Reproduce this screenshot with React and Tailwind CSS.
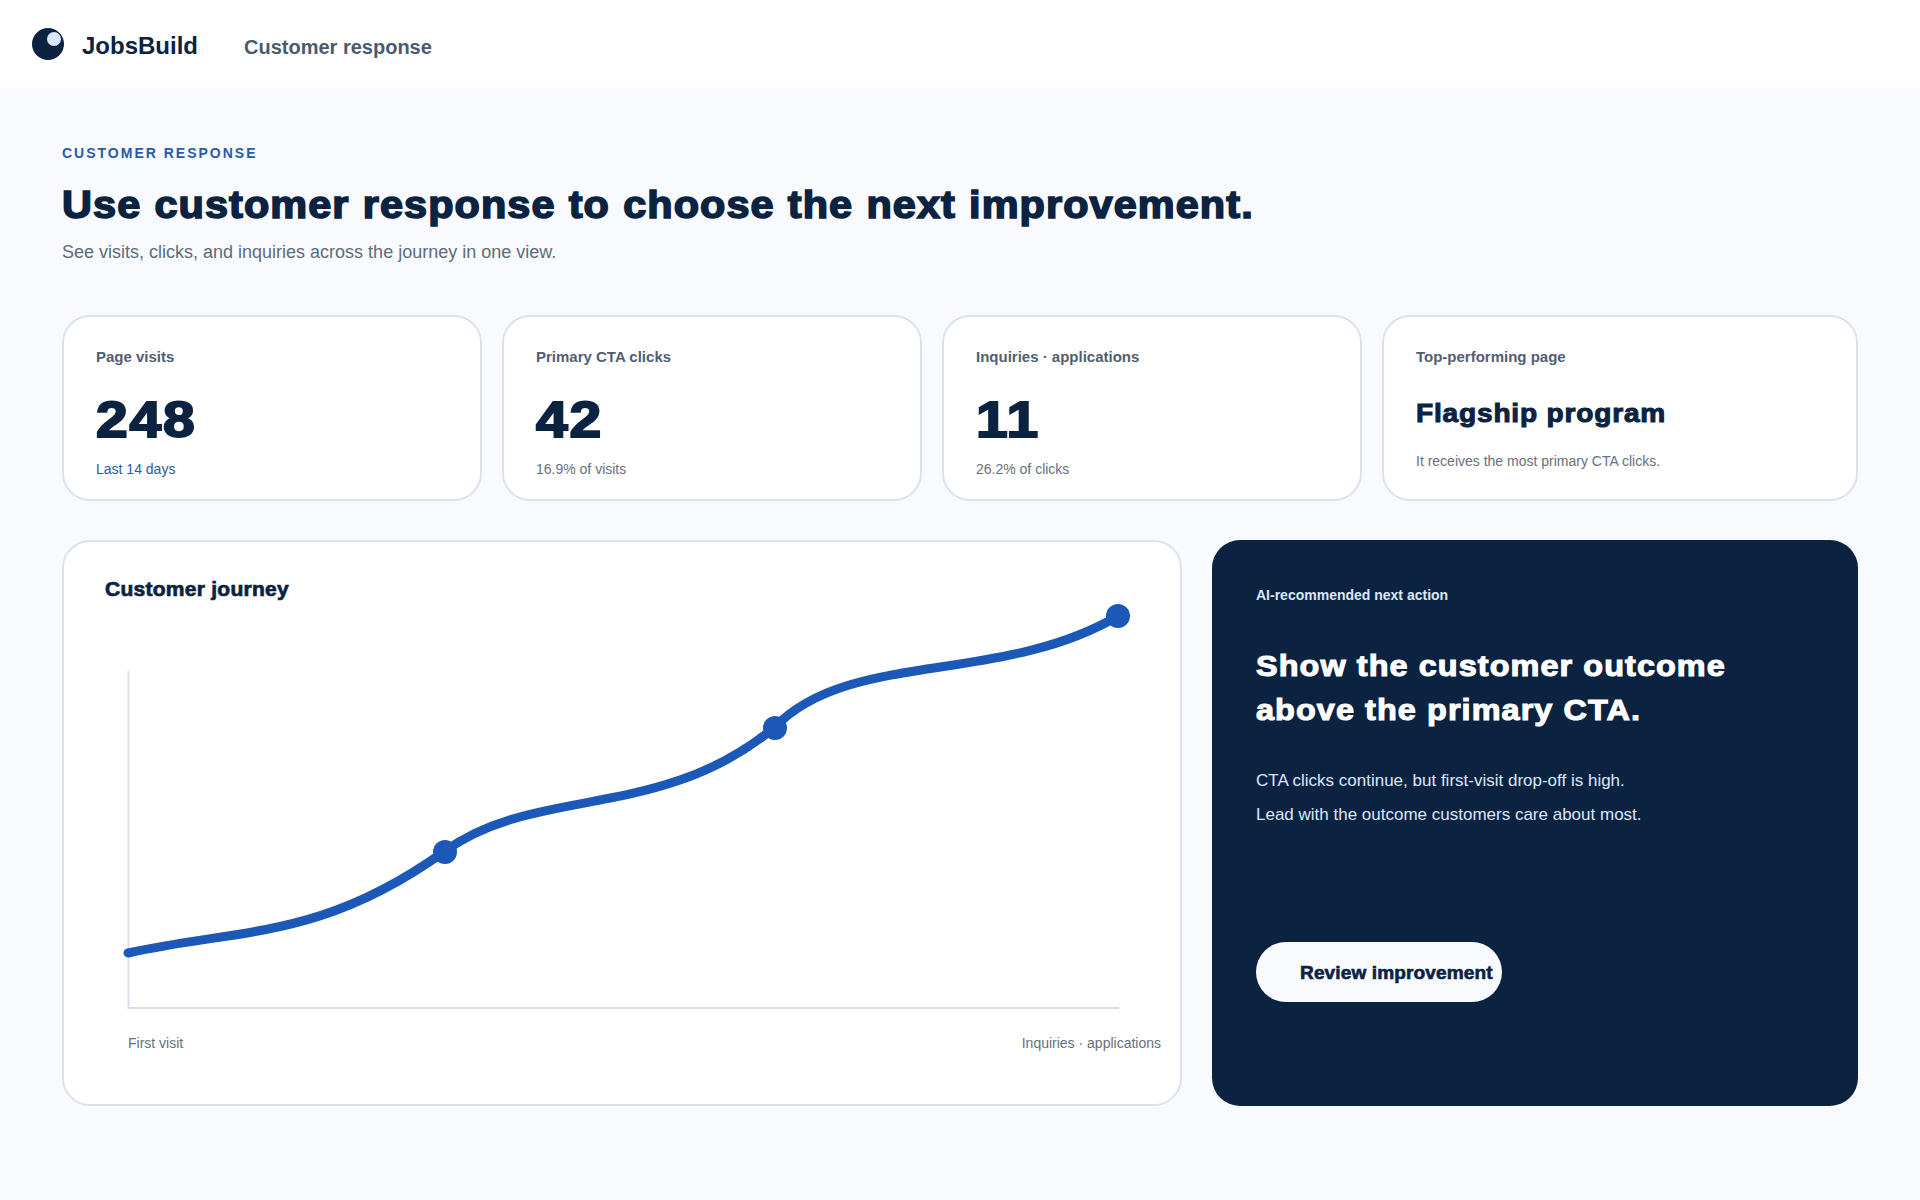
const font = "font-['Liberation_Sans',Arial,sans-serif]";

const stats = [
  { label: "Page visits", value: "248", note: "Last 14 days", noteColor: "text-[#2b5aa8]" },
  { label: "Primary CTA clicks", value: "42", note: "16.9% of visits", noteColor: "text-[#667080]" },
  { label: "Inquiries · applications", value: "11", note: "26.2% of clicks", noteColor: "text-[#667080]" },
];

function Logo() {
  return (
    <svg width="34" height="34" viewBox="0 0 34 34" className="block">
      <circle cx="17" cy="17" r="16" fill="#0b2340" />
      <circle cx="23" cy="12" r="7" fill="#dbe7fb" />
    </svg>
  );
}

function StatCard({ label, value, note, noteColor }) {
  return (
    <div className="h-[186px] rounded-[28px] border-2 border-[#dbe2ec] bg-white px-[32px] pt-[30px]">
      <div className="text-[15px] leading-[20px] font-bold text-[#525e70]">{label}</div>
      <div className="mt-[21px] w-fit origin-left scale-x-[1.14] text-[50px] leading-[64px] font-bold tracking-[1.6px] text-[#0b2340] [-webkit-text-stroke:2px_#0b2340]">
        {value}
      </div>
      <div className={`mt-[7px] text-[14px] leading-[20px] ${noteColor}`}>{note}</div>
    </div>
  );
}

function JourneyChart() {
  return (
    <svg width="1034" height="420" viewBox="104 610 1034 420" className="mt-[7px] block overflow-visible">
      <path d="M127.5 671 V1008 H1118" fill="none" stroke="#d9dee7" strokeWidth="2" />
      <path
        d="M127 953 C240 928 320 940 444 851 C535 785 660 822 774 727 C848 650 1000 685 1117 616"
        fill="none"
        stroke="#1c58b8"
        strokeWidth="9"
        strokeLinecap="round"
      />
      <circle cx="444" cy="852" r="12" fill="#1c58b8" />
      <circle cx="774" cy="728" r="12" fill="#1c58b8" />
      <circle cx="1117" cy="616" r="12" fill="#1c58b8" />
    </svg>
  );
}

export default function App() {
  return (
    <div className={`${font} min-h-[1200px] bg-[#f8fafd]`}>
      <header className="flex h-[88px] items-center bg-white pl-[31px]">
        <Logo />
        <span className="ml-[17px] mt-[4px] text-[24px] font-bold text-[#0b2340]">JobsBuild</span>
        <span className="ml-[46px] mt-[6px] text-[20px] font-bold text-[#4b5a6e]">Customer response</span>
      </header>

      <main className="px-[62px] pt-[55px]">
        <div className="text-[14px] leading-[20px] font-bold tracking-[2px] text-[#2b5aa8]">CUSTOMER RESPONSE</div>
        <h1 className="mt-[16px] w-fit origin-left scale-x-[1.09] text-[38px] leading-[52px] font-bold tracking-[1px] [word-spacing:0.5px] text-[#0b2340] [-webkit-text-stroke:1.6px_#0b2340]">
          Use customer response to choose the next improvement.
        </h1>
        <p className="mt-[8px] text-[18px] leading-[26px] text-[#5f6b7a]">
          See visits, clicks, and inquiries across the journey in one view.
        </p>

        <section className="mt-[50px] grid grid-cols-[420px_420px_420px_476px] gap-[20px]">
          {stats.map((s) => (
            <StatCard key={s.label} {...s} />
          ))}
          <div className="h-[186px] rounded-[28px] border-2 border-[#dbe2ec] bg-white px-[32px] pt-[30px]">
            <div className="text-[15px] leading-[20px] font-bold text-[#525e70]">Top-performing page</div>
            <div className="mt-[28px] w-fit origin-left scale-x-[1.08] text-[26px] leading-[36px] font-bold tracking-[0.75px] text-[#0b2340] [-webkit-text-stroke:1px_#0b2340]">
              Flagship program
            </div>
            <div className="mt-[20px] text-[14px] leading-[20px] text-[#667080]">It receives the most primary CTA clicks.</div>
          </div>
        </section>

        <section className="mt-[39px] grid grid-cols-[1120px_646px] gap-[30px]">
          <div className="h-[566px] rounded-[28px] border-2 border-[#dbe2ec] bg-white pl-[41px] pt-[33px]">
            <h2 className="w-fit origin-left scale-x-[1.05] text-[20px] leading-[28px] font-bold tracking-[0.25px] text-[#0b2340] [-webkit-text-stroke:0.7px_#0b2340]">
              Customer journey
            </h2>
            <JourneyChart />
            <div className="ml-[23px] mt-[3px] flex w-[1033px] justify-between text-[14px] leading-[20px] text-[#667080]">
              <span>First visit</span>
              <span>Inquiries · applications</span>
            </div>
          </div>

          <div className="flex h-[566px] flex-col rounded-[28px] bg-[#0b2340] px-[44px] pt-[45px]">
            <div className="text-[14px] leading-[20px] font-bold text-[#dbe7fb]">AI-recommended next action</div>
            <h2 className="mt-[39px] w-fit origin-left scale-x-[1.08] text-[30px] leading-[44px] font-bold tracking-[1px] text-white [-webkit-text-stroke:1.1px_#ffffff]">
              Show the customer outcome
              <br />
              above the primary CTA.
            </h2>
            <p className="mt-[32px] text-[17px] leading-[34px] text-[#dbe7fb]">
              CTA clicks continue, but first-visit drop-off is high.
              <br />
              Lead with the outcome customers care about most.
            </p>
            <button className="mt-[110px] flex h-[60px] w-[246px] items-center whitespace-nowrap rounded-full bg-[#f8fafd] pl-[44px] pt-[2px] text-[18px] font-bold text-[#0b2340]">
              <span className="origin-left scale-x-[1.06] tracking-[0.1px] [-webkit-text-stroke:0.6px_#0b2340]">Review improvement</span>
            </button>
          </div>
        </section>
      </main>
    </div>
  );
}
